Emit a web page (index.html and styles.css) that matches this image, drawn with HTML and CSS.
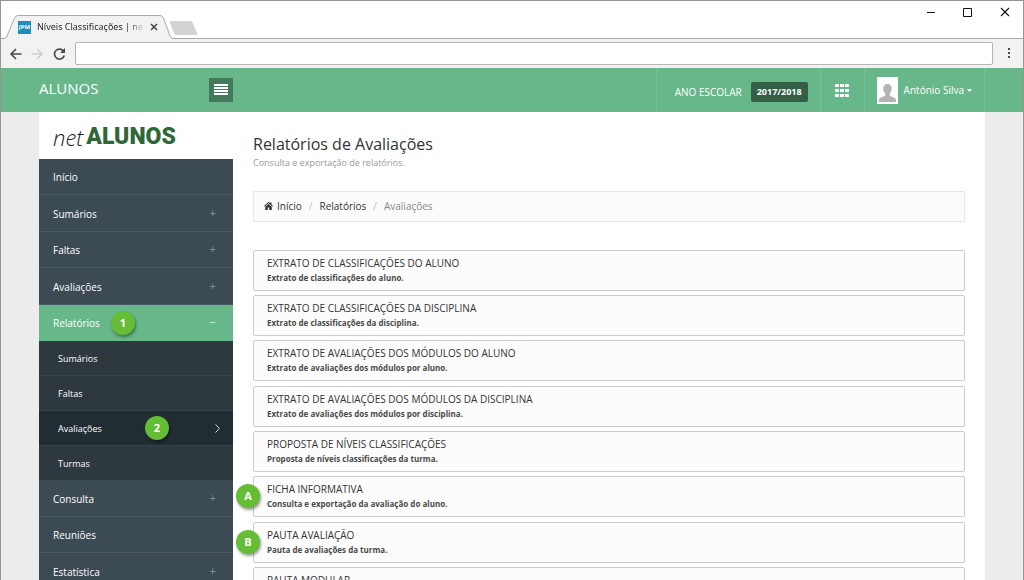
FILE: index.html
```html
<!DOCTYPE html>
<html lang="pt">
<head>
<meta charset="utf-8">
<title>Níveis Classificações | netAlunos</title>
<link rel="stylesheet" href="styles.css">
</head>
<body>
<div class="window">
  <div class="titlebar">
    <div class="tab">
      <svg class="tab-shape" width="200" height="24" viewBox="0 0 200 24" aria-hidden="true">
        <path d="M0 23.5H3Q5 23.5 6 21L13.500 3Q14.500 .5 17 .5H159Q161.500 .5 162.500 3L169 21Q170 23.500 172 23.500H200V24H0Z" fill="#f2f2f2"/>
        <path d="M0 23.500H3Q5 23.500 6 21L13.500 3Q14.500 .5 17 .5H159Q161.500 .5 162.500 3L169 21Q170 23.500 172 23.500H200" fill="none" stroke="#a9a9a9"/>
        <path d="M170 6H189Q191 6 192 8L196 18Q197 20 195 20H176Q174 20 173 18L169 8Q168.500 6 170 6Z" fill="#d3d3d3"/>
      </svg>
      <span class="favicon">JPM</span>
      <span class="tab-title">Níveis Classificações | ne</span>
      <button class="tab-close" aria-label="Fechar separador"><svg width="8" height="8" viewBox="0 0 8 8"><path d="M1 1L7 7M7 1L1 7" stroke="#444" stroke-width="1.500"/></svg></button>
    </div>
    <div class="window-buttons">
      <button aria-label="Minimizar"><svg width="10" height="10" viewBox="0 0 10 10"><path d="M1 5.500H9" stroke="#111"/></svg></button>
      <button aria-label="Maximizar"><svg width="10" height="10" viewBox="0 0 10 10"><path d="M.5 1.500H8.500V9.500H.5Z" fill="none" stroke="#111"/></svg></button>
      <button aria-label="Fechar"><svg width="10" height="10" viewBox="0 0 10 10"><path d="M1 1L9 9M9 1L1 9" stroke="#111" stroke-width="1.100"/></svg></button>
    </div>
  </div>
  <div class="toolbar">
    <button aria-label="Anterior"><svg width="13" height="12" viewBox="0 0 13 12"><path d="M12.500 6H2M7 1L2 6L7 11" fill="none" stroke="#4a4a4a" stroke-width="1.600"/></svg></button>
    <button aria-label="Seguinte"><svg width="13" height="12" viewBox="0 0 13 12"><path d="M.5 6H11M6 1L11 6L6 11" fill="none" stroke="#cfcfcf" stroke-width="1.600"/></svg></button>
    <button aria-label="Recarregar"><svg width="13" height="12" viewBox="0 0 13 12"><path d="M10.500 3A5 5 0 1 0 11.300 7.500" fill="none" stroke="#4a4a4a" stroke-width="1.700"/><path d="M12 0V5H7Z" fill="#4a4a4a"/></svg></button>
    <input class="address" type="text" aria-label="Endereço">
    <button class="more" aria-label="Menu do navegador"><svg width="4" height="12" viewBox="0 0 4 12" fill="#4a4a4a"><rect x="1" width="2" height="2"/><rect x="1" y="4" width="2" height="2"/><rect x="1" y="8" width="2" height="2"/></svg></button>
  </div>
  <header class="header">
    <div class="brand-area">
      <span class="brand">ALUNOS</span>
      <button class="menu-toggle" aria-label="Alternar menu"><svg width="14" height="12" viewBox="0 0 14 12" fill="#fff"><path d="M0 0H14V2H0ZM0 3H14V5H0ZM0 6H14V8H0ZM0 9H14V11H0Z"/></svg></button>
    </div>
    <div class="header-cell year"><span>ANO ESCOLAR</span><span class="year-badge">2017/2018</span></div>
    <button class="header-cell apps" aria-label="Aplicações"><svg width="14" height="13" viewBox="0 0 14 13" fill="#fff"><path d="M0 0H4V3H0ZM5 0H9V3H5ZM10 0H14V3H10ZM0 5H4V8H0ZM5 5H9V8H5ZM10 5H14V8H10ZM0 10H4V13H0ZM5 10H9V13H5ZM10 10H14V13H10Z"/></svg></button>
    <button class="header-cell user">
      <svg width="21" height="27" viewBox="0 0 21 27"><path fill="#fff" d="M0 0H21V27H0Z"/><path fill="#b3b3b3" d="M10.500 7C13 7 15 9 14.700 12C14.500 14.500 13.500 15.500 12.800 16.500V18.500C14 20 18 20 19 22.500V25H2V22.500C3 20 7 20 8.200 18.500V16.500C7.500 15.500 6.500 14.500 6.300 12C6 9 8 7 10.500 7Z"/></svg>
      <span>António Silva</span>
      <svg class="caret" width="5" height="3" viewBox="0 0 5 3"><path d="M0 0H5L2.500 3Z" fill="#fff"/></svg>
    </button>
  </header>
  <div class="page">
    <aside class="sidebar">
      <div class="logo"><span class="logo-net">net</span><span class="logo-name">ALUNOS</span></div>
      <nav>
        <ul class="menu">
          <li><a href="#">Início</a></li>
          <li><a href="#">Sumários<span class="sign">+</span></a></li>
          <li><a href="#">Faltas<span class="sign">+</span></a></li>
          <li><a href="#">Avaliações<span class="sign">+</span></a></li>
          <li>
            <a class="open" href="#">Relatórios<span class="sign">−</span><span class="marker step-one">1</span></a>
            <ul class="submenu">
              <li><a href="#">Sumários</a></li>
              <li><a href="#">Faltas</a></li>
              <li><a class="current" href="#">Avaliações<svg width="5" height="9" viewBox="0 0 5 9"><path d="M.5 .5L4.500 4.500L.5 8.500" fill="none" stroke="#d5dadd"/></svg><span class="marker step-two">2</span></a></li>
              <li><a href="#">Turmas</a></li>
            </ul>
          </li>
          <li><a href="#">Consulta<span class="sign">+</span></a></li>
          <li><a href="#">Reuniões</a></li>
          <li><a href="#">Estatística<span class="sign">+</span></a></li>
        </ul>
      </nav>
    </aside>
    <main class="content">
      <h1>Relatórios de Avaliações</h1>
      <p class="lead">Consulta e exportação de relatórios.</p>
      <nav class="breadcrumb" aria-label="Localização">
        <a href="#"><svg width="9" height="8" viewBox="0 0 9 8" fill="#333"><path d="M4.500 0L6 1.300V.5H7.500V2.700L9 4L8.400 4.700L4.500 1.300L.6 4.700L0 4Z"/><path d="M4.500 2.100L7.800 5V8H5.300V5.500H3.700V8H1.200V5Z"/></svg>Início</a>
        <span class="slash">/</span>
        <a href="#">Relatórios</a>
        <span class="slash">/</span>
        <span class="here">Avaliações</span>
      </nav>
      <ul class="reports">
        <li><a href="#"><span class="name">EXTRATO DE CLASSIFICAÇÕES DO ALUNO</span><span class="about">Extrato de classificações do aluno.</span></a></li>
        <li><a href="#"><span class="name">EXTRATO DE CLASSIFICAÇÕES DA DISCIPLINA</span><span class="about">Extrato de classificações da disciplina.</span></a></li>
        <li><a href="#"><span class="name">EXTRATO DE AVALIAÇÕES DOS MÓDULOS DO ALUNO</span><span class="about">Extrato de avaliações dos módulos por aluno.</span></a></li>
        <li><a href="#"><span class="name">EXTRATO DE AVALIAÇÕES DOS MÓDULOS DA DISCIPLINA</span><span class="about">Extrato de avaliações dos módulos por disciplina.</span></a></li>
        <li><a href="#"><span class="name">PROPOSTA DE NÍVEIS CLASSIFICAÇÕES</span><span class="about">Proposta de níveis classificações da turma.</span></a></li>
        <li><a href="#"><span class="name">FICHA INFORMATIVA</span><span class="about">Consulta e exportação da avaliação do aluno.</span></a><span class="marker edge">A</span></li>
        <li><a href="#"><span class="name">PAUTA AVALIAÇÃO</span><span class="about">Pauta de avaliações da turma.</span></a><span class="marker edge">B</span></li>
        <li><a href="#"><span class="name">PAUTA MODULAR</span></a></li>
      </ul>
    </main>
  </div>
</div>
</body>
</html>
```
FILE: styles.css
```css
* { box-sizing: border-box; }
body { margin: 0; font-family: "Open Sans", "Noto Sans", sans-serif; font-size: 10px; color: #333; }
button { border: 0; padding: 0; background: none; font: inherit; color: inherit; display: flex; align-items: center; justify-content: center; }
a { color: inherit; text-decoration: none; }
ul { margin: 0; padding: 0; list-style: none; }
svg { display: block; flex: none; }

.window { height: 100vh; display: flex; flex-direction: column; overflow: hidden; border: 1px solid #959595; border-bottom: 0; background: #ececec; }

.titlebar { flex: none; height: 38px; display: flex; align-items: flex-end; justify-content: space-between; background: #fff; box-shadow: inset 0 -1px #a9a9a9; }
.tab { position: relative; width: 200px; height: 24px; display: flex; align-items: center; padding-left: 17px; }
.tab-shape { position: absolute; left: 0; top: 0; }
.favicon { position: relative; width: 13px; height: 13px; background: #1b8fc0; color: #fff; font-size: 6px; line-height: 13px; font-weight: 700; text-align: center; }
.tab-title { position: relative; width: 107px; margin-left: 6px; white-space: nowrap; font-family: "Noto Sans", sans-serif; font-size: 9px; line-height: 14px; color: transparent; background: linear-gradient(90deg, #222 84%, #ddd 100%); background-clip: text; }
.tab-close { position: relative; margin-left: 6px; }
.window-buttons { align-self: flex-start; display: flex; gap: 27px; padding: 6px 13px 0 0; }

.toolbar { flex: none; height: 29px; display: flex; align-items: center; gap: 9px; padding: 0 12px 0 8px; background: #f2f2f2; }
.address { flex: 1; min-width: 0; height: 23px; border: 1px solid #b5b5b5; border-radius: 2px; background: #fff; padding: 0 6px; }
.more { margin-left: 5px; }

.header { flex: none; height: 44px; display: flex; padding: 0 38px; background: #67b78a; color: #fff; }
.brand-area { flex: 1; display: flex; align-items: center; }
.brand { width: 170px; font-size: 15px; line-height: 20px; padding-bottom: 4px; }
.menu-toggle { width: 24px; height: 24px; background: #447a5b; }
.header-cell { border-left: 1px solid #75bf96; display: flex; align-items: center; }
.year { gap: 9px; padding: 3px 12px 0 18px; }
.year-badge { padding: 0 6px; font-size: 9px; line-height: 20px; font-weight: 700; background: #335f47; border-radius: 2px; }
.apps { width: 44px; }
.user { gap: 6px; padding: 0 12px; border-right: 1px solid #75bf96; }
.caret { margin-left: -3px; }

.page { flex: 1; min-height: 0; display: flex; margin: 0 38px; background: #fff; }
.sidebar { flex: none; width: 194px; }
.logo { height: 47px; display: flex; align-items: center; gap: 3px; padding: 2px 0 0 14px; line-height: 28px; }
.logo-net { font-size: 22px; font-style: italic; font-weight: 300; color: #222; }
.logo-name { font-family: Roboto, sans-serif; font-size: 23px; font-weight: 900; color: #2d6836; }

.menu { color: #fff; }
.menu a { position: relative; height: 36px; display: flex; align-items: center; justify-content: space-between; padding: 1px 17px 0 14px; background: #3c4a54; border-bottom: 1px solid #475963; }
.menu > li:nth-child(even) > a { height: 37px; }
.menu .open { background: #67b78a; border-color: #67b78a; }
.sign { font-size: 12px; font-weight: 300; line-height: 12px; color: #aab3b9; }
.open .sign { color: #fff; }
.menu .submenu a { height: 35px; padding: 0 13px 0 19px; font-size: 9px; font-weight: 500; background: #2d383f; border-color: #37454e; }
.menu .submenu .current { background: #222c33; }
.menu .submenu li:last-child a { height: 34px; border-bottom: 0; }

.marker { position: absolute; width: 24px; height: 24px; border-radius: 50%; background: #65bd35; color: #fff; font-size: 11px; line-height: 24px; font-weight: 700; text-align: center; box-shadow: 1px 2px 3px rgba(0, 0, 0, .4); }
.step-one { left: 72px; top: 6px; }
.step-two { left: 106px; top: 5px; }
.edge { left: -17px; top: 8px; }

.content { flex: 1; min-width: 0; padding: 20px 20px 0; }
h1 { margin: 0; font-size: 16px; line-height: 24px; font-weight: 400; }
.lead { margin: 0 0 21px; font-size: 9px; line-height: 14px; color: #999; }
.breadcrumb { height: 31px; display: flex; align-items: center; gap: 7px; padding: 0 10px 2px; border: 1px solid #e6e6e6; background: #fbfbfb; font-weight: 500; }
.breadcrumb a { display: flex; align-items: center; gap: 4px; }
.slash { color: #bbb; font-weight: 400; }
.here { color: #888; font-weight: 400; }
.reports { margin-top: 28px; }
.reports li { position: relative; margin-bottom: 4px; }
.reports li:nth-child(3n) { margin-bottom: 5px; }
.reports a { height: 41px; display: flex; flex-direction: column; padding: 5px 13px; border: 1px solid #ccc; border-radius: 2px; background: #fcfcfc; }
.name { font-size: 10px; line-height: 15px; }
.about { font-size: 8px; line-height: 14px; font-weight: 700; color: #4a4a4a; }
```
